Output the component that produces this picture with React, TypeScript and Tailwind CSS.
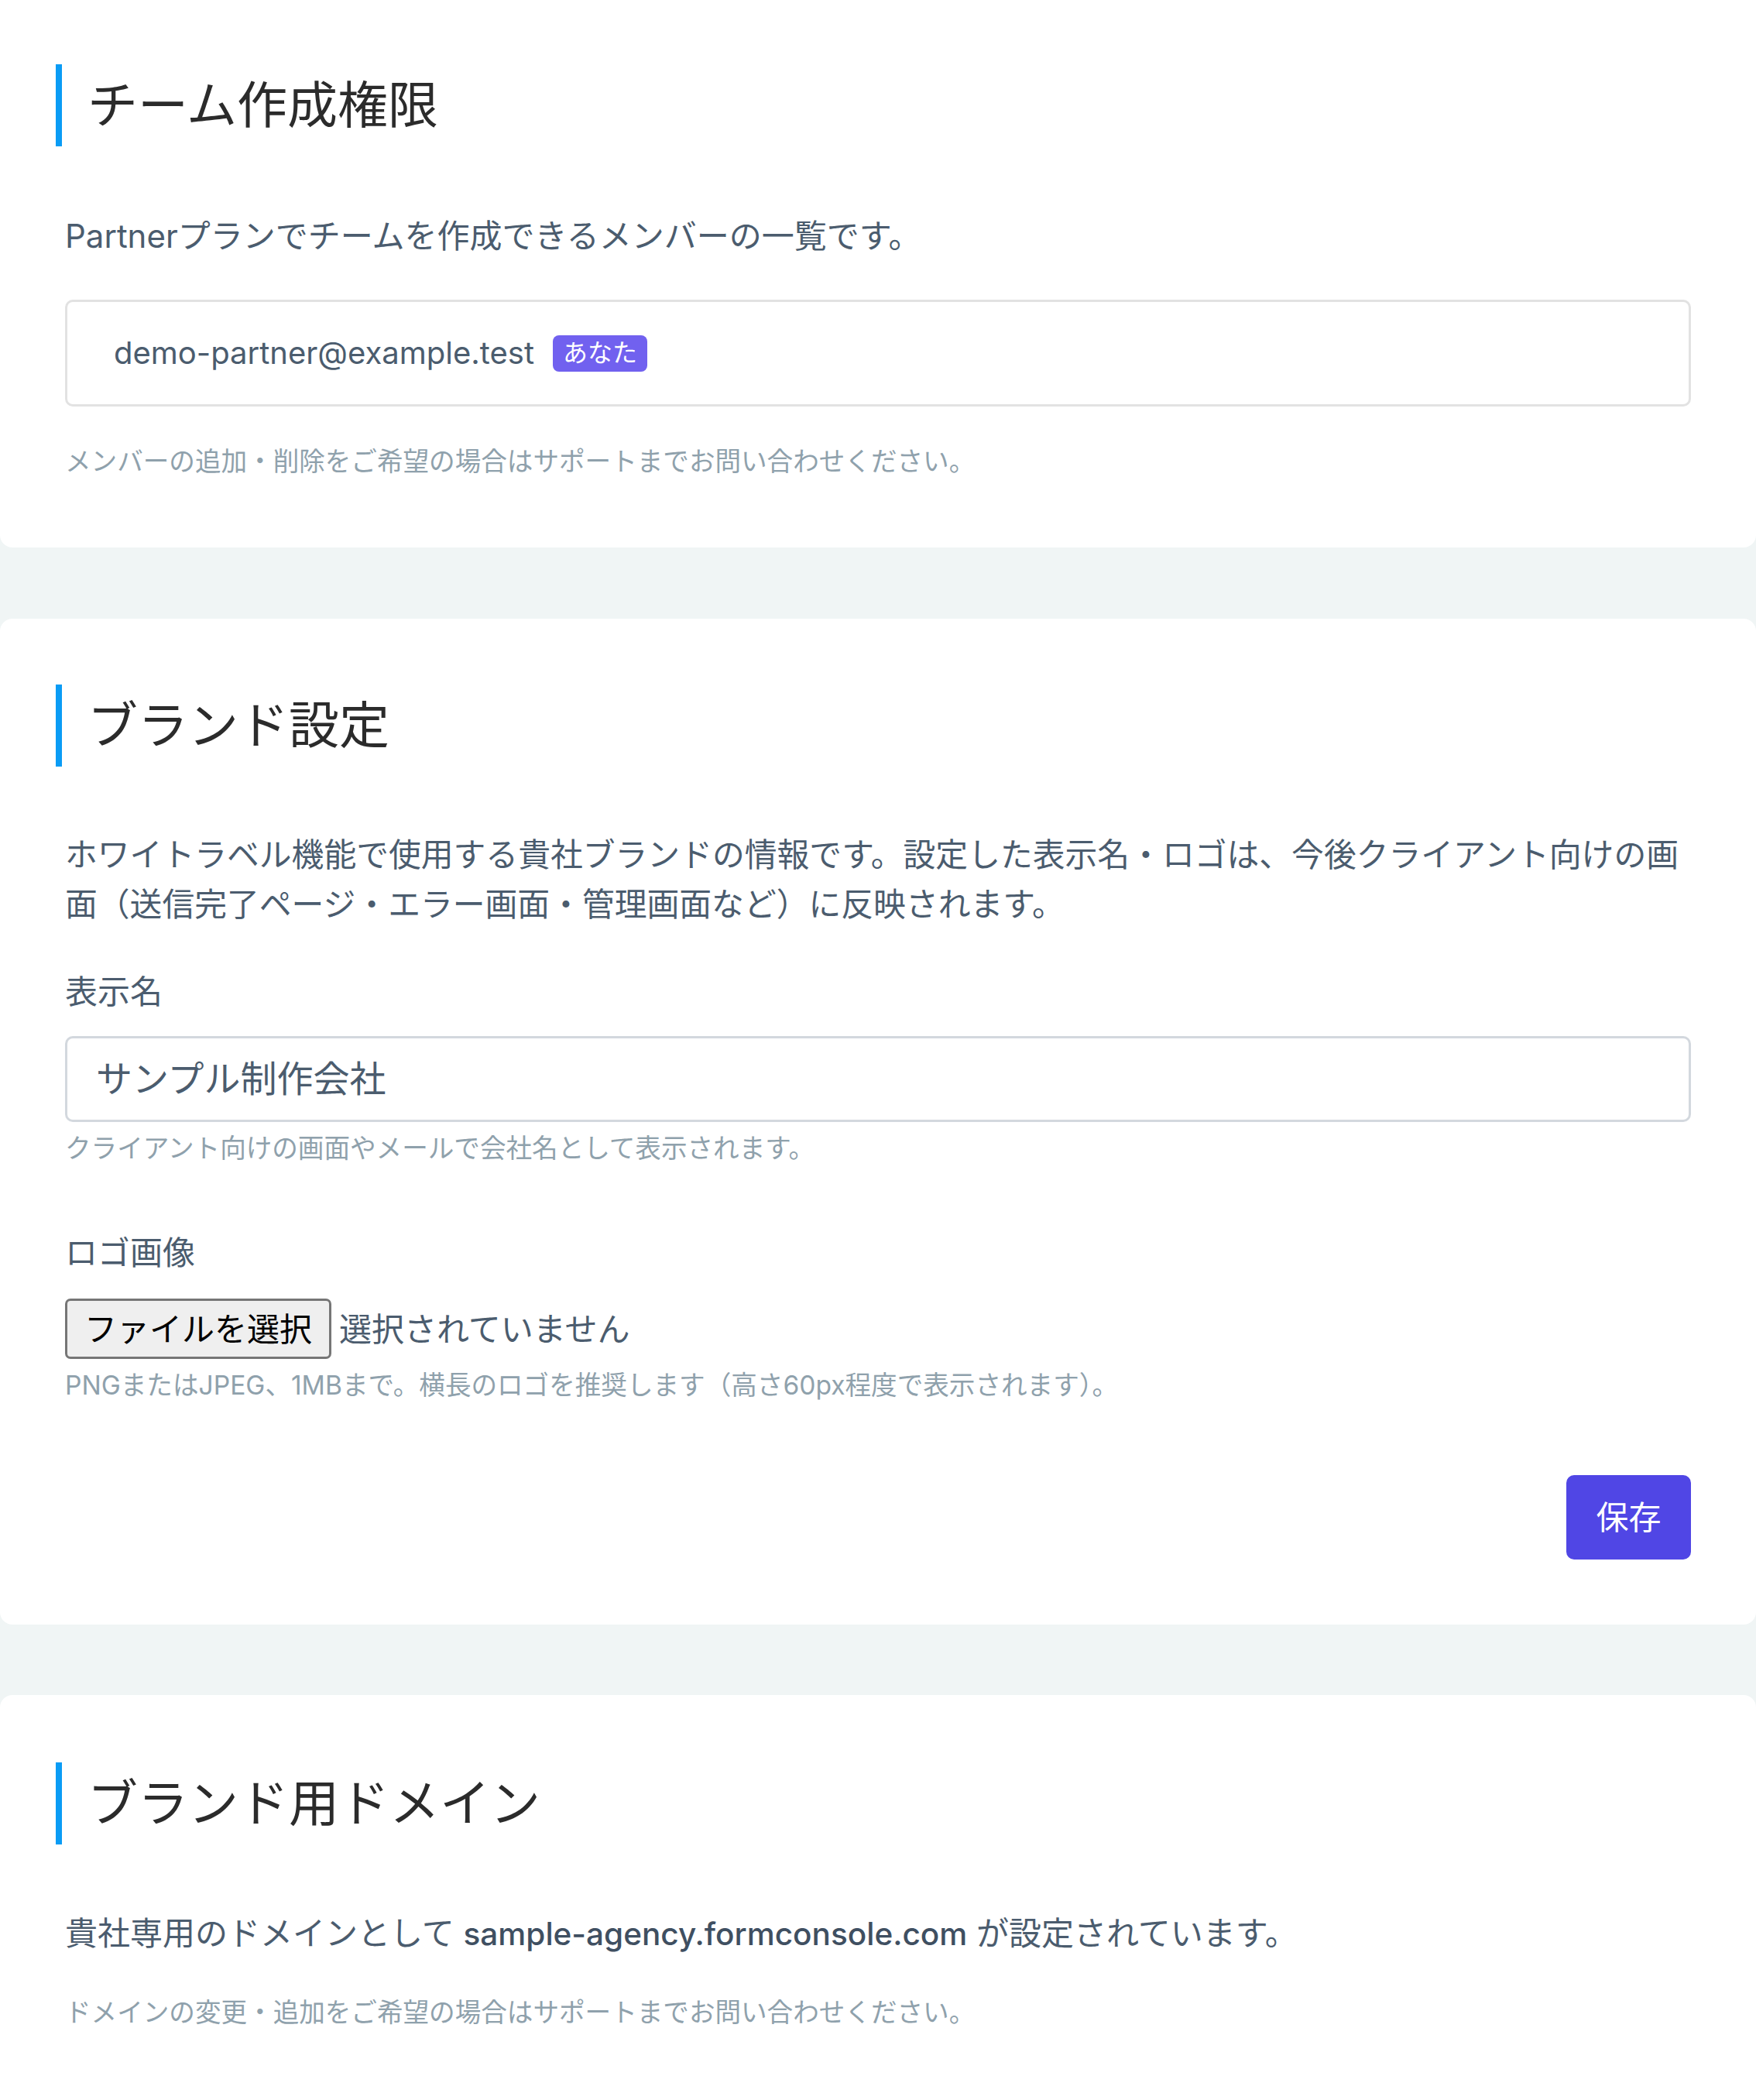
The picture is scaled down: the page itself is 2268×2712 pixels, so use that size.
import React from "react";

const font = "font-['Inter','Noto_Sans_CJK_JP',sans-serif]";

const Heading = ({ children }: { children: React.ReactNode }) => (
  <div className="-ml-[12px] flex h-[106px] items-center border-l-[8px] border-[#0a9cf5] pl-[33px]">
    <h2 className="text-[65px] leading-[80px] font-normal text-[#2b2b2b]">{children}</h2>
  </div>
);

const App = () => {
  return (
    <div className={`min-h-screen bg-[#f0f5f5] ${font}`}>
      {/* チーム作成権限 */}
      <section className="rounded-b-[16px] bg-white px-[84px] pt-[83px] pb-[86px]">
        <Heading>チーム作成権限</Heading>
        <p className="mt-[84px] text-[42px] leading-[64px] text-[#4b5c6e]">
          Partnerプランでチームを作成できるメンバーの一覧です。
        </p>
        <div className="mt-[50px] flex h-[138px] items-center rounded-[10px] border-[3px] border-[#e2e2e2] pl-[60px]">
          <span className="text-[40px] text-[#4b5c6e]">demo-partner@example.test</span>
          <span className="ml-[24px] flex h-[47px] items-center rounded-[8px] bg-[#7161ef] px-[13px] text-[32px] text-white">
            あなた
          </span>
        </div>
        <p className="mt-[46px] text-[33.6px] leading-[50px] text-[#8fa1ac]">
          メンバーの追加・削除をご希望の場合はサポートまでお問い合わせください。
        </p>
      </section>

      {/* ブランド設定 */}
      <section className="mt-[92px] rounded-[16px] bg-white px-[84px] pt-[85px] pb-[84px]">
        <Heading>ブランド設定</Heading>
        <p className="mt-[82px] text-[41.8px] leading-[64px] text-[#4b5c6e]">
          ホワイトラベル機能で使用する貴社ブランドの情報です。設定した表示名・ロゴは、今後クライアント向けの画面（送信完了ページ・エラー画面・管理画面など）に反映されます。
        </p>

        <label className="mt-[49px] block text-[42px] leading-[64px] text-[#4b5c6e]">表示名</label>
        <div className="mt-[25px] flex h-[111px] items-center rounded-[10px] border-[3px] border-[#d3d8de] pl-[37px]">
          <span className="text-[47px] text-[#4b5c6e]">サンプル制作会社</span>
        </div>
        <p className="mt-[9px] text-[33.6px] leading-[50px] text-[#8fa1ac]">
          クライアント向けの画面やメールで会社名として表示されます。
        </p>

        <label className="mt-[78px] block text-[42px] leading-[64px] text-[#4b5c6e]">ロゴ画像</label>
        <div className="mt-[27px] flex items-center gap-[10px]">
          <button className="flex h-[78px] items-center rounded-[7px] border-[3px] border-[#767676] bg-[#efefef] px-[22px] text-[42px] text-black">
            ファイルを選択
          </button>
          <span className="text-[42px] text-[#4b5c6e]">選択されていません</span>
        </div>
        <p className="mt-[9px] text-[33.6px] leading-[50px] text-[#8fa1ac]">
          PNGまたはJPEG、1MBまで。横長のロゴを推奨します（高さ60px程度で表示されます）。
        </p>

        <div className="mt-[91px] flex justify-end">
          <button className="h-[109px] w-[161px] rounded-[10px] bg-[#5046e5] text-[42px] text-white">保存</button>
        </div>
      </section>

      {/* ブランド用ドメイン */}
      <section className="mt-[91px] rounded-t-[16px] bg-white px-[84px] pt-[87px] pb-[120px]">
        <Heading>ブランド用ドメイン</Heading>
        <p className="mt-[83px] text-[42px] leading-[64px] text-[#4b5c6e]">
          貴社専用のドメインとして{" "}
          <span className="text-[40.5px] font-medium text-[#3f4f61]">sample-agency.formconsole.com</span> が設定されています。
        </p>
        <p className="mt-[44px] text-[33.6px] leading-[50px] text-[#8fa1ac]">
          ドメインの変更・追加をご希望の場合はサポートまでお問い合わせください。
        </p>
      </section>
    </div>
  );
};

export default App;
